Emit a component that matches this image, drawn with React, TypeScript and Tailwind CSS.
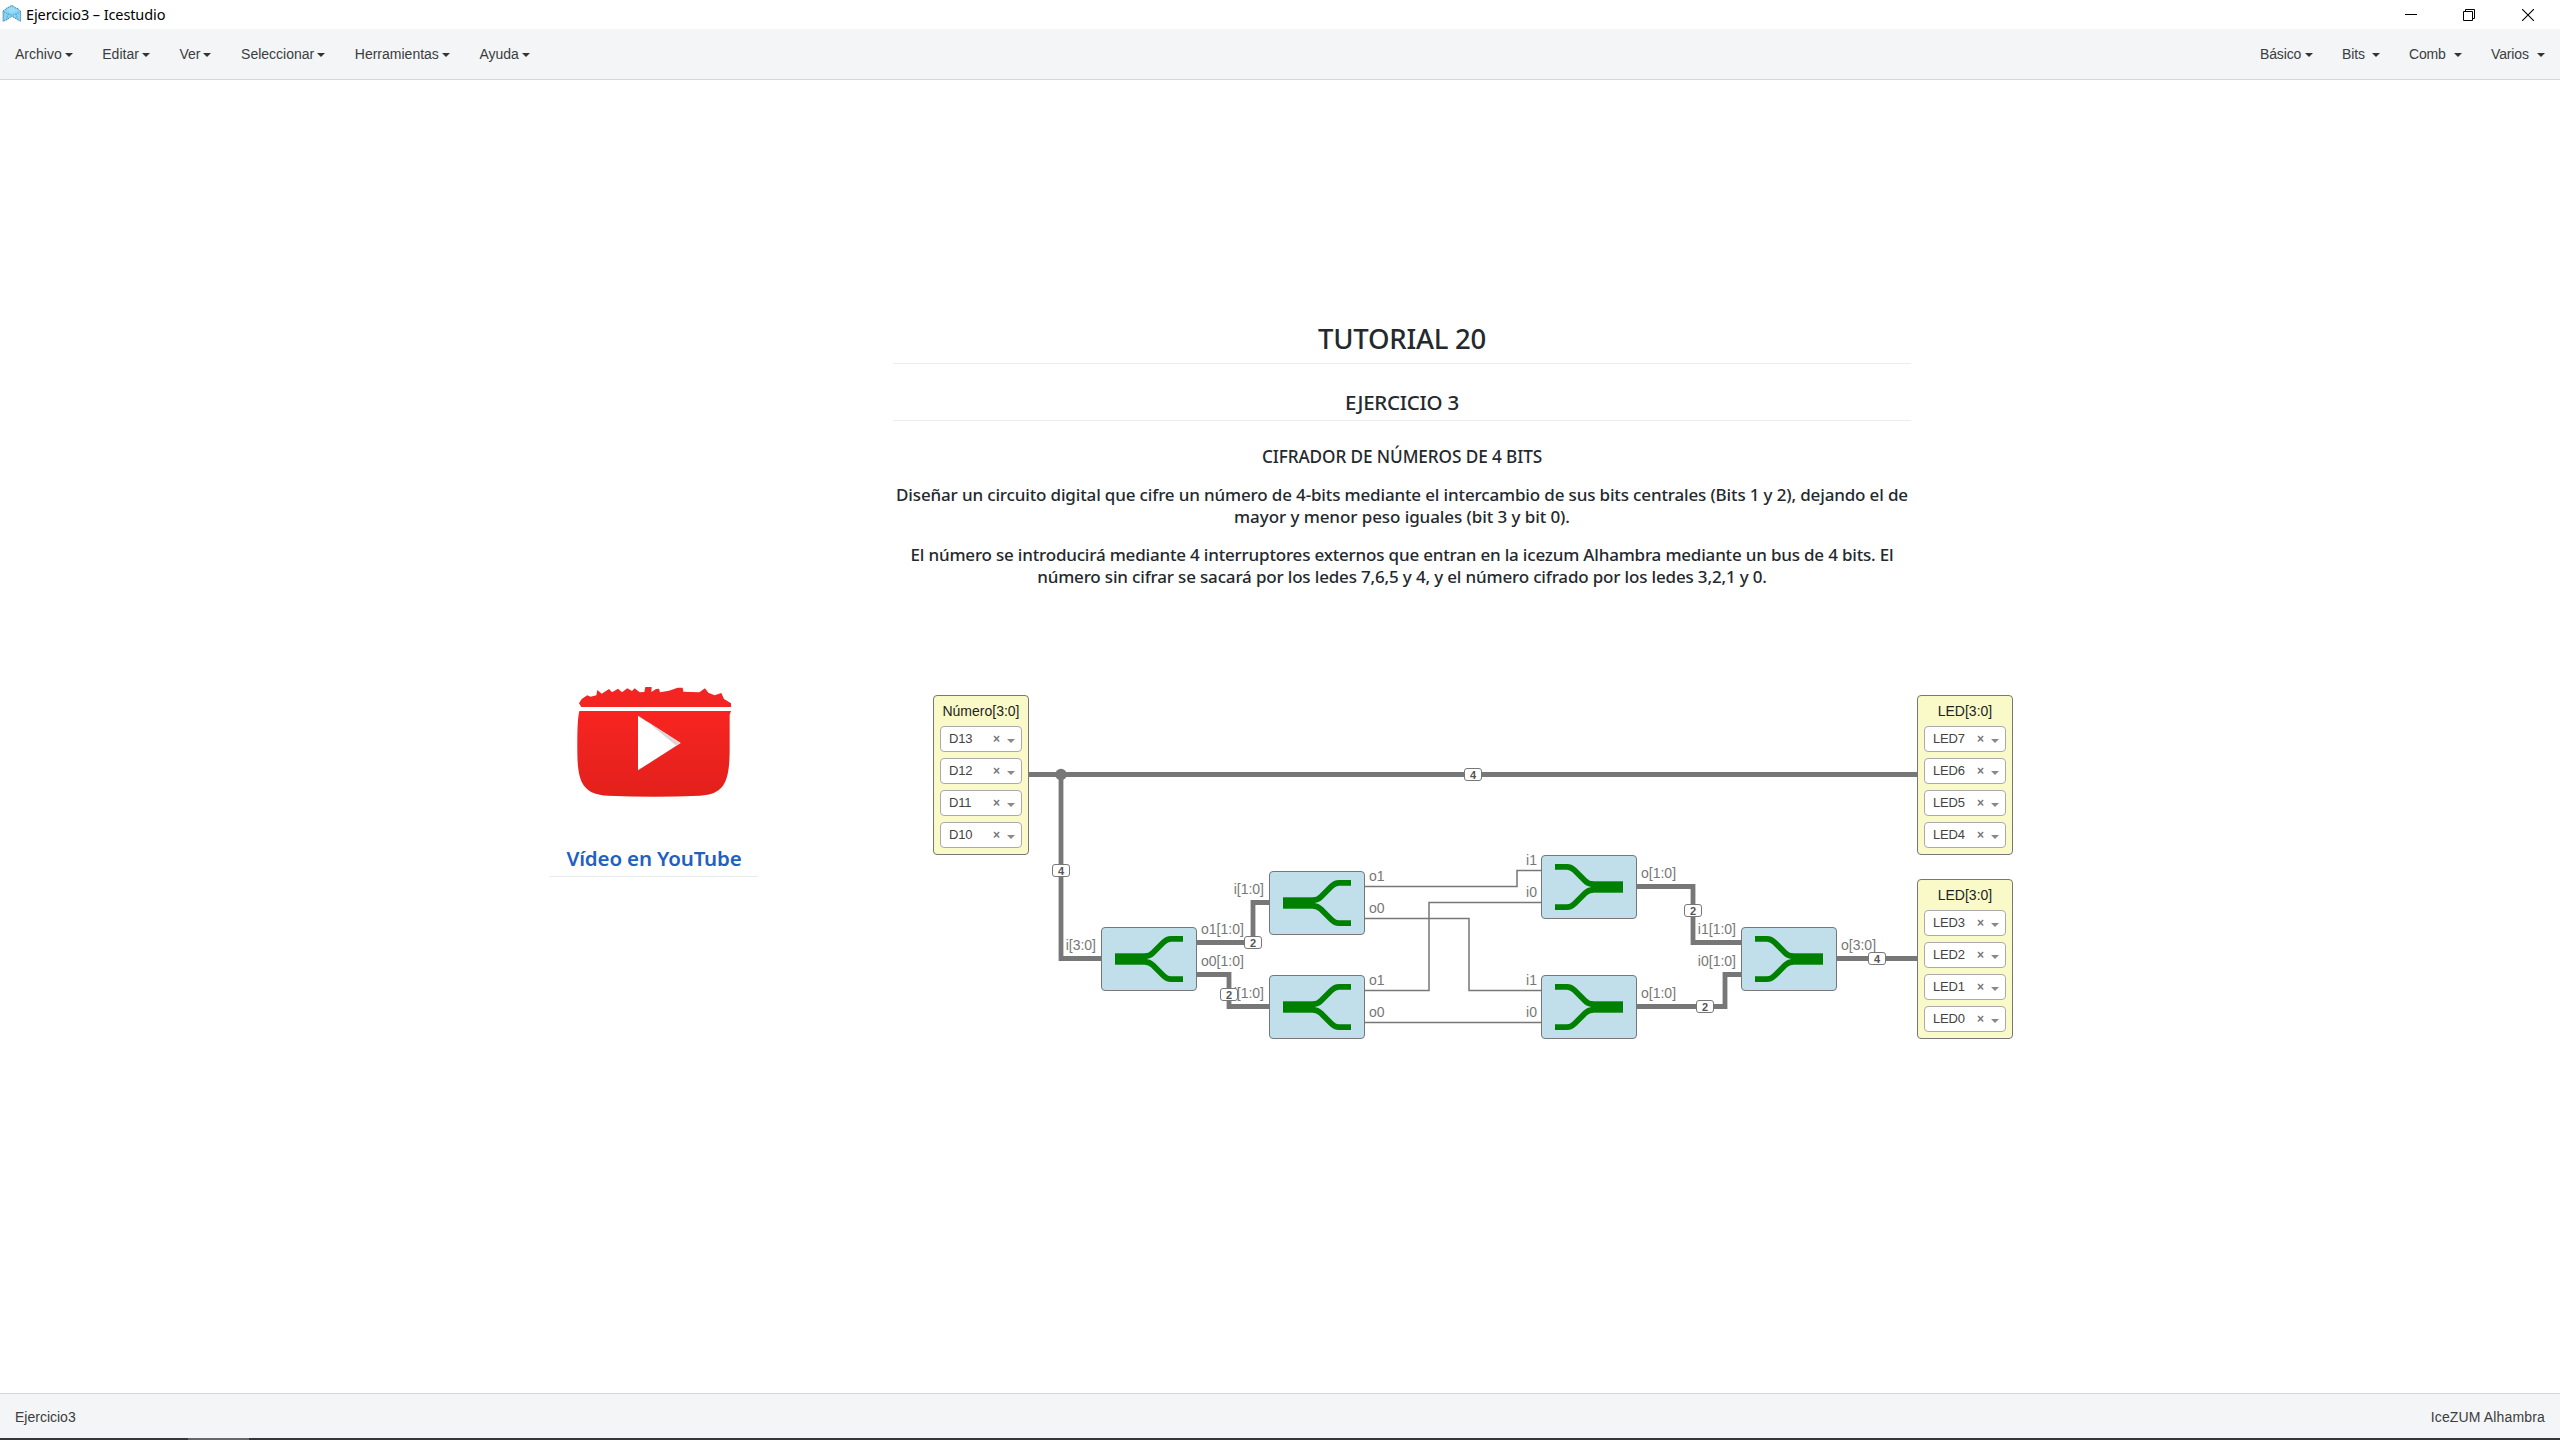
import type { ReactNode } from "react";

function Caret({ className = "" }: { className?: string }) {
  return (
    <span
      className={`inline-block h-0 w-0 border-x-4 border-t-4 border-x-transparent ${className}`}
    />
  );
}

const LEFT_MENU = ["Archivo", "Editar", "Ver", "Seleccionar", "Herramientas", "Ayuda"];

const RIGHT_MENU: { label: string; box: string }[] = [
  { label: "Básico", box: "w-[53px]" },
  { label: "Bits", box: "w-[38px]" },
  { label: "Comb", box: "w-[53px]" },
  { label: "Varios", box: "w-[54px]" },
];

function TitleBar() {
  return (
    <header className="flex h-[29px] shrink-0 items-center bg-white">
      <svg className="ml-[2px] mb-px h-[18px] w-[20px]" viewBox="0 0 57 54" preserveAspectRatio="none">
        <path
          d="M3 18 L8 15 L12 10 L22 5 L28 1 L38 8 L46 11 L49 16 L53 18 V49 L44 44 L37 39 L28 34 L21 39 L14 44 L3 49 Z"
          fill="#83d3f5"
          stroke="#2f6482"
          strokeWidth="2.4"
          strokeDasharray="4 2"
        />
        <path
          d="M5 21 L18 27 L28 31 L40 27 L52 21 M18 27 L13 42 M40 27 L44 42"
          fill="none"
          stroke="#4795ba"
          strokeWidth="2.4"
          strokeDasharray="4 3"
        />
        <path d="M12 15 L27 6 L45 16 L28 25 Z" fill="#9adcf6" />
      </svg>
      <span className="ml-[4px] font-['Noto_Sans',sans-serif] text-[14.5px] leading-[29px] tracking-[-0.1px] text-black">
        Ejercicio3 – Icestudio
      </span>
      <div className="ml-auto mr-[26px] flex h-full items-center">
        <svg className="mr-[46px] h-3 w-3" viewBox="0 0 12 12">
          <path d="M0 5.5 H12" stroke="#000" />
        </svg>
        <svg className="mr-[47px] h-3 w-3" viewBox="0 0 12 12" fill="none" stroke="#000">
          <path d="M0.5 2.5 H9.5 V11.5 H0.5 Z M2.5 2.5 V0.5 H11.5 V9.5 H9.5" />
        </svg>
        <svg className="h-3 w-3" viewBox="0 0 12 12" stroke="#000" strokeWidth="1.1">
          <path d="M0 0 L12 12 M12 0 L0 12" />
        </svg>
      </div>
    </header>
  );
}

function MenuBar() {
  return (
    <nav className="flex h-[51px] shrink-0 justify-between border-b border-[#d3d7d9] bg-[#f4f5f7] pl-[15px] pr-[15px] text-[14px] leading-[51px] text-[#3a3d40]">
      <div className="flex gap-[29.6px]">
        {LEFT_MENU.map((label) => (
          <div key={label} className="flex items-center">
            <span>{label}</span>
            <Caret className="ml-[3px] mt-[2px] border-t-[#333]" />
          </div>
        ))}
      </div>
      <div className="flex gap-[29px] tracking-[-0.15px]">
        {RIGHT_MENU.map((m) => (
          <div key={m.label} className={`flex items-center justify-between ${m.box}`}>
            <span>{m.label}</span>
            <Caret className="mt-[2px] border-t-[#333]" />
          </div>
        ))}
      </div>
    </nav>
  );
}

function PinBlock({ title, pins, place }: { title: string; pins: string[]; place: string }) {
  return (
    <div
      className={`absolute flex h-[160px] w-[96px] flex-col items-center rounded-[4px] border border-[#777] bg-[#fafac9] ${place}`}
    >
      <div className="h-[30px] text-[14px] leading-[31px] whitespace-nowrap text-[#222]">{title}</div>
      <div className="flex flex-col gap-[6px]">
        {pins.map((p) => (
          <div
            key={p}
            className="flex h-[26px] w-[82px] items-center rounded-[4px] border border-[#aaa] bg-white pl-[8px] pr-[6px] leading-[24px] text-[#444]"
          >
            <span className="text-[13px] tracking-[-0.2px]">{p}</span>
            <span className="ml-auto mr-[7px] text-[12px] font-bold text-[#777]">×</span>
            <Caret className="mt-[3px] border-t-[#888]" />
          </div>
        ))}
      </div>
    </div>
  );
}

function Fork({ place, join = false }: { place: string; join?: boolean }) {
  return (
    <div className={`absolute h-[64px] w-[96px] rounded-[4px] border border-[#777] bg-[#c0dfeb] ${place}`}>
      <svg
        className={join ? "-m-px h-[64px] w-[96px] -scale-x-100" : "-m-px h-[64px] w-[96px]"}
        viewBox="0 0 96 64"
      >
        <path d="M14 26.3 H46 V37.7 H14 Z" fill="#008000" />
        <path
          d="M44 29.2 C49 29.2 50.5 27.2 52.5 25.2 L62.5 15.2 C65.5 12.2 67 11.8 70 11.8 H82 M44 34.8 C49 34.8 50.5 36.8 52.5 38.8 L62.5 48.8 C65.5 51.8 67 52.2 70 52.2 H82"
          fill="none"
          stroke="#008000"
          strokeWidth="5.8"
        />
      </svg>
    </div>
  );
}

const BUSES = [
  "M1029 774.5 H1917",
  "M1061 774.5 V958.5 H1101",
  "M1197 942.5 H1253 V902.5 H1269",
  "M1197 974.5 H1229 V1006.5 H1269",
  "M1637 886.5 H1693 V942.5 H1741",
  "M1637 1006.5 H1725 V974.5 H1741",
  "M1837 958.5 H1917",
];

const WIRES = [
  "M1365 886.5 H1517 V870.5 H1541",
  "M1365 918.5 H1469 V990.5 H1541",
  "M1365 990.5 H1429 V902.5 H1541",
  "M1365 1022.5 H1541",
];

const PORTS: [string, string, string][] = [
  ["i[3:0]", "left-[1046px] w-[50px] text-right", "top-[937px]"],
  ["o1[1:0]", "left-[1201px]", "top-[921px]"],
  ["o0[1:0]", "left-[1201px]", "top-[953px]"],
  ["i[1:0]", "left-[1214px] w-[50px] text-right", "top-[881px]"],
  ["i[1:0]", "left-[1214px] w-[50px] text-right", "top-[985px]"],
  ["o1", "left-[1369px]", "top-[868px]"],
  ["o0", "left-[1369px]", "top-[900px]"],
  ["o1", "left-[1369px]", "top-[972px]"],
  ["o0", "left-[1369px]", "top-[1004px]"],
  ["i1", "left-[1487px] w-[50px] text-right", "top-[852px]"],
  ["i0", "left-[1487px] w-[50px] text-right", "top-[884px]"],
  ["i1", "left-[1487px] w-[50px] text-right", "top-[972px]"],
  ["i0", "left-[1487px] w-[50px] text-right", "top-[1004px]"],
  ["o[1:0]", "left-[1641px]", "top-[865px]"],
  ["o[1:0]", "left-[1641px]", "top-[985px]"],
  ["i1[1:0]", "left-[1686px] w-[50px] text-right", "top-[921px]"],
  ["i0[1:0]", "left-[1686px] w-[50px] text-right", "top-[953px]"],
  ["o[3:0]", "left-[1841px]", "top-[937px]"],
];

const SIZES: [string, string][] = [
  ["4", "left-[1464px] top-[768px]"],
  ["4", "left-[1052px] top-[864px]"],
  ["2", "left-[1244px] top-[936px]"],
  ["2", "left-[1220px] top-[988px]"],
  ["2", "left-[1684px] top-[904px]"],
  ["2", "left-[1696px] top-[1000px]"],
  ["4", "left-[1868px] top-[952px]"],
];

function Line({ children, className = "" }: { children: ReactNode; className?: string }) {
  return <span className={`block whitespace-nowrap ${className}`}>{children}</span>;
}

function ExerciseNote() {
  return (
    <article className="absolute left-[893px] top-[241px] w-[1018px] text-center font-['Noto_Sans',sans-serif] font-medium text-[#24292e]">
      <h1 className="h-[43px] border-b border-[#eaecef] text-[27.5px] leading-[36px] tracking-[-0.25px]">
        TUTORIAL 20
      </h1>
      <h2 className="mt-[25px] h-[32px] border-b border-[#eaecef] text-[20.5px] leading-[26px] tracking-[-0.25px]">
        EJERCICIO 3
      </h2>
      <h3 className="mt-[25px] text-[17.2px] leading-[22px] tracking-[-0.1px]">
        CIFRADOR DE NÚMEROS DE 4 BITS
      </h3>
      <p className="mt-[16px] text-[17px] leading-[22px]">
        <Line className="tracking-[-0.15px]">
          Diseñar un circuito digital que cifre un número de 4-bits mediante el intercambio de sus bits
          centrales (Bits 1 y 2), dejando el de
        </Line>
        <Line className="tracking-[-0.08px]">mayor y menor peso iguales (bit 3 y bit 0).</Line>
      </p>
      <p className="mt-[16px] text-[17px] leading-[22px]">
        <Line className="tracking-[-0.19px]">
          El número se introducirá mediante 4 interruptores externos que entran en la icezum Alhambra
          mediante un bus de 4 bits. El
        </Line>
        <Line className="tracking-[-0.17px]">
          número sin cifrar se sacará por los ledes 7,6,5 y 4, y el número cifrado por los ledes 3,2,1 y
          0.
        </Line>
      </p>
    </article>
  );
}

function VideoNote() {
  return (
    <article className="absolute left-[550px] top-[604px] w-[208px]">
      <svg className="ml-[26px] h-[116px] w-[156px]" viewBox="108 42 468 348">
        <defs>
          <linearGradient id="red" x1="0" y1="0" x2="0" y2="1">
            <stop offset="0" stopColor="#f92421" />
            <stop offset="0.4" stopColor="#ee2320" />
            <stop offset="1" stopColor="#e3201b" />
          </linearGradient>
        </defs>
        <path
          d="M124 111 L117 100 L125 87 L142 76 L152 80 L169 76 L172 60 L185 71 L207 57 L216 67 L234 56 L246 67 L262 55 L276 63 L284 55 L299 67 L313 66 L316 51 L335 51 L334 66 L348 57 L357 56 L360 67 L387 62 L413 53 L428 53 L430 65 L452 66 L478 67 L495 55 L505 68 L524 76 L544 69 L552 87 L573 100 L573 111 Z"
          fill="#f32522"
        />
        <path
          d="M118 123 H573 L569 134 V235 C569 285 565 325 549 347 C534 367 513 374 480 377 Q340 383 204 377 C169 375 147 367 132 347 C116 325 112 290 112 240 C112 190 112 150 118 123 Z"
          fill="url(#red)"
        />
        <path d="M294 137 L422 219 L294 301 Z" fill="#fff" />
        <path d="M320 154 L422 219 L407 226 Z" fill="#dfd3d3" />
      </svg>
      <h2 className="mt-[45px] h-[32px] border-b border-[#e6ebf2] text-center font-['Noto_Sans',sans-serif] text-[20.5px] leading-[26px] font-semibold tracking-[-0.15px] whitespace-nowrap text-[#1f60c1]">
        Vídeo en YouTube
      </h2>
    </article>
  );
}

function Canvas() {
  return (
    <main className="relative min-h-0 flex-1 overflow-hidden bg-white">
      <ExerciseNote />
      <VideoNote />
      <div className="absolute inset-x-0 -top-[80px] h-[1440px]">
        {PORTS.map(([label, x, y], i) => (
          <span key={i} className={`absolute text-[14px] leading-[16px] whitespace-nowrap text-[#777] ${x} ${y}`}>
            {label}
          </span>
        ))}
        <svg className="absolute inset-0 h-[1440px] w-[2560px]" viewBox="0 0 2560 1440" fill="none" stroke="#777">
          {WIRES.map((d) => (
            <path key={d} d={d} strokeWidth="1.5" />
          ))}
          {BUSES.map((d) => (
            <path key={d} d={d} strokeWidth="4.8" />
          ))}
          <circle cx="1061" cy="774.5" r="5.8" fill="#777" stroke="none" />
        </svg>
        {SIZES.map(([n, pos], i) => (
          <span
            key={i}
            className={`absolute h-[13px] w-[18px] rounded-[3px] border border-[#777] bg-white text-center text-[11px] leading-[12px] font-bold text-[#555] ${pos}`}
          >
            {n}
          </span>
        ))}
        <Fork place="left-[1101px] top-[927px]" />
        <Fork place="left-[1269px] top-[871px]" />
        <Fork place="left-[1269px] top-[975px]" />
        <Fork place="left-[1541px] top-[855px]" join />
        <Fork place="left-[1541px] top-[975px]" join />
        <Fork place="left-[1741px] top-[927px]" join />
        <PinBlock title="Número[3:0]" pins={["D13", "D12", "D11", "D10"]} place="left-[933px] top-[695px]" />
        <PinBlock title="LED[3:0]" pins={["LED7", "LED6", "LED5", "LED4"]} place="left-[1917px] top-[695px]" />
        <PinBlock title="LED[3:0]" pins={["LED3", "LED2", "LED1", "LED0"]} place="left-[1917px] top-[879px]" />
      </div>
    </main>
  );
}

export default function App() {
  return (
    <div className="flex h-[1440px] w-[2560px] flex-col overflow-hidden bg-white font-['Liberation_Sans',Arial,sans-serif]">
      <TitleBar />
      <MenuBar />
      <Canvas />
      <footer className="flex h-[45px] shrink-0 justify-between border-t border-[#d3d7d9] bg-[#f4f5f7] px-[15px] text-[14px] leading-[47px] text-[#3a3d40]">
        <span>Ejercicio3</span>
        <span className="tracking-[0.15px]">IceZUM Alhambra</span>
      </footer>
      <div className="flex h-[2px] shrink-0 bg-[#35363a]">
        <div className="ml-[188px] w-[61px] bg-[#66676a]" />
      </div>
    </div>
  );
}
